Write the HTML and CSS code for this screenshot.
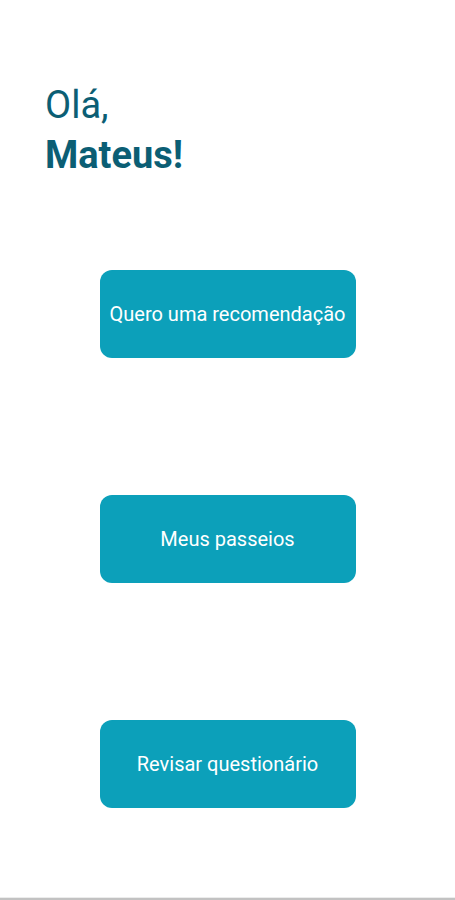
FILE: index.html
```html
<!DOCTYPE html>
<html lang="pt-BR">
<head>
    <meta charset="UTF-8">
    <meta name="viewport" content="width=device-width, initial-scale=1.0">
    <title>Início</title>
    <link rel="stylesheet" href="styles.css">
</head>
<body>
    <div class="screen">
        <h1 class="greeting">Olá,<br><strong>Mateus!</strong></h1>

        <div class="menu">
            <button class="menu-button">Quero uma recomendação</button>
            <button class="menu-button">Meus passeios</button>
            <button class="menu-button">Revisar questionário</button>
        </div>
    </div>
    <div class="bottom-line"></div>
</body>
</html>
```

FILE: styles.css
```css
body {
    font-family: Roboto, "Noto Sans", Arial, sans-serif;
    background-color: #ffffff;
    margin: 0;
    padding: 0;
}

.screen {
    height: 897px;
    display: flex;
    flex-direction: column;
}

.greeting {
    margin: 0;
    padding: 80px 0 0 45px;
    font-size: 38px;
    font-weight: 400;
    line-height: 50px;
    color: #0b5e74;
}

.greeting strong {
    font-weight: 700;
}

.menu {
    display: flex;
    flex-direction: column;
    align-items: center;
    gap: 137px;
    margin-top: 90px;
}

.menu-button {
    width: 256px;
    height: 88px;
    background-color: #0ca0ba;
    color: #ffffff;
    border: none;
    border-radius: 12px;
    font-family: Roboto, "Noto Sans", Arial, sans-serif;
    font-size: 20px;
    cursor: pointer;
}

.bottom-line {
    height: 3px;
    background-color: #c2c2c2;
    border-top: 1px solid #ececec;
    box-sizing: border-box;
}
```
